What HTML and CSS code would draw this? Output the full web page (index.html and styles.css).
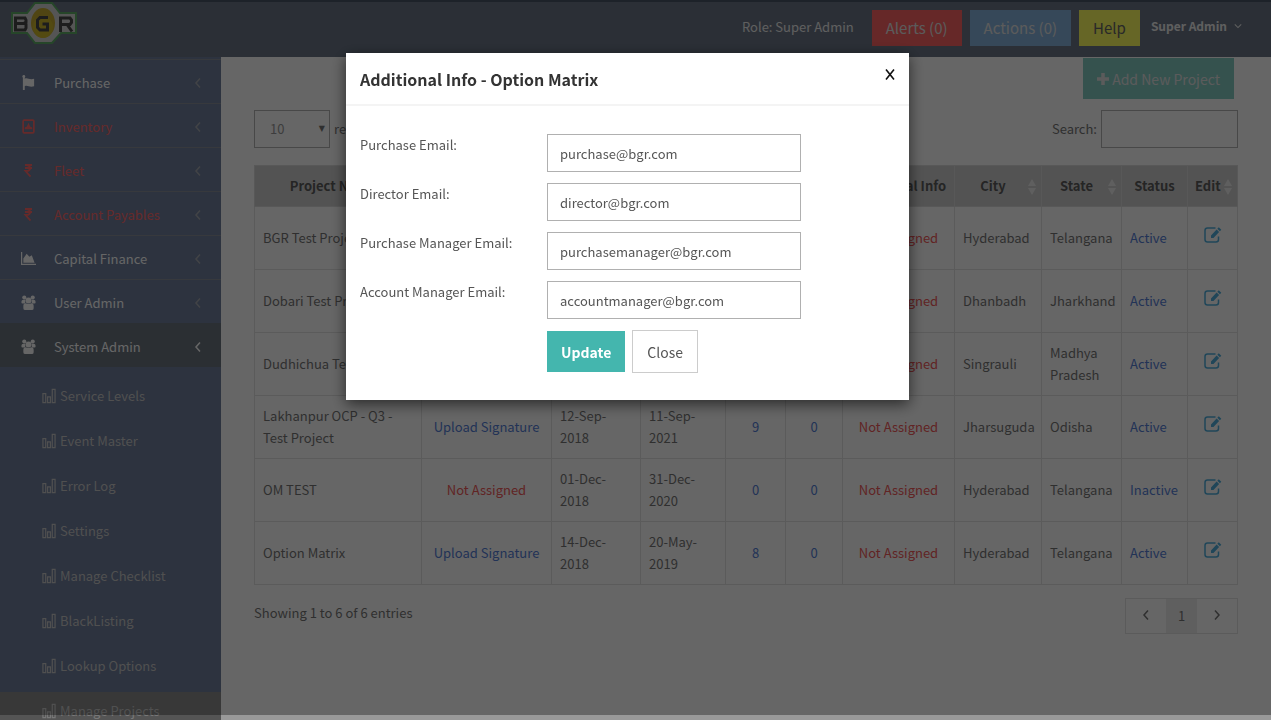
FILE: index.html
```
<!DOCTYPE html>
<html lang="en">
<head>
<meta charset="utf-8">
<title>Manage Projects</title>
<link rel="stylesheet" href="styles.css">
</head>
<body>
<svg class="defs" aria-hidden="true">
  <symbol id="i-left" viewBox="0 0 8 12"><path d="M6 1.500 2 6l4 4.500" fill="none" stroke="currentColor" stroke-width="1.500"/></symbol>
  <symbol id="i-right" viewBox="0 0 8 12"><path d="M2 1.500 6 6l-4 4.500" fill="none" stroke="currentColor" stroke-width="1.500"/></symbol>
  <symbol id="i-users" viewBox="0 0 16 16"><g fill="currentColor"><circle cx="3.500" cy="2.700" r="2.200"/><circle cx="12.500" cy="2.700" r="2.200"/><path d="M.5 8.500V6.800Q.5 5 2.500 5h2v4H1.500Q.5 9 .5 8.500ZM15.500 8.500V6.800Q15.500 5 13.500 5h-2v4h3q1 0 1-.5Z"/><circle cx="8" cy="5.800" r="3.200"/><path d="M2.500 14v-2.200Q2.500 8.800 5 8.800q3 1.400 6 0 2.500 0 2.500 3V14q0 2-2 2h-7q-2 0-2-2Z"/></g></symbol>
  <symbol id="i-bars" viewBox="0 0 15 16"><path d="M1 5.500h3v9.500H1ZM6 9h3v6H6ZM11 1h3v14h-3Z" fill="none" stroke="currentColor" stroke-width="1.300"/></symbol>
  <symbol id="i-rupee" viewBox="0 0 8 13"><path d="M.5 1h7M.5 4h7M1.500 1c5.500 0 5.500 6 0 6H1l5 5.500" fill="none" stroke="currentColor" stroke-width="1.800"/></symbol>
  <symbol id="i-flag" viewBox="0 0 14 16"><circle cx="2" cy="1.500" r="1.500" fill="currentColor"/><path d="M1 1h2v15H1ZM3 4c3-1.500 5 1.500 10 0v8c-5 1.500-7-1.500-10 0Z" fill="currentColor"/></symbol>
  <symbol id="i-invoice" viewBox="0 0 12 14"><rect x="1" y="1" width="10" height="12" rx="1" fill="none" stroke="currentColor" stroke-width="1.600"/><path d="M6 3.500 7.500 7 9.500 8v1.500h-7V8l2-1Z" fill="currentColor"/></symbol>
  <symbol id="i-area" viewBox="0 0 16 14"><path d="M0 0h1.300v12.500H16V14H0ZM2.500 11.500V7L6 2l3 3 2.500-1.500L14.500 11.500Z" fill="currentColor"/></symbol>
  <symbol id="i-edit" viewBox="0 0 18 18"><path d="M11.500 2H3.500Q1 2 1 4.500v9Q1 16 3.500 16h8.500q2.500 0 2.500-2.500V10.500" fill="none" stroke="currentColor" stroke-width="1.500"/><path d="m14.800 1.200 2.500 2.500-1.400 1.500-2.600-2.500ZM12.600 3.500l2.500 2.500-5.600 6H7V9.400Z" fill="currentColor"/></symbol>
  <symbol id="i-sort" viewBox="0 0 8 16"><path d="M4 0 8 7H0ZM4 16 0 9h8Z" fill="currentColor"/></symbol>
</svg>

<header class="topbar">
  <svg class="logo" viewBox="0 0 66 42" role="img" aria-label="BGR">
    <path d="M24 1h17l8 10h16v20H50l-9 10H24l-8-10H1V11h15Z" fill="#d5d5d5" stroke="#5fb068" stroke-width="2"/>
    <ellipse cx="32" cy="21" rx="12" ry="15" fill="#c8ac30"/>
    <ellipse cx="32" cy="25" rx="10" ry="11" fill="#d0b92c"/>
    <g fill="none" stroke="#4a4a4a" stroke-width="3"><path d="M4.500 16H14l1 2v2l-1.500 1 1.500 1v4l-1 2H4.500ZM5 21.500h9"/><path d="M37 15.500H29l-2.500 2.500v7.500l2.500 2.500h7.500v-6h-5"/><path d="M49.500 30V16H59l1.500 2v2.500L59 22.500h-9M56 22.500l5 7"/></g>
  </svg>
  <div class="top-actions">
    <span class="role">Role: Super Admin</span>
    <button class="top-btn alerts">Alerts (0)</button>
    <button class="top-btn actions">Actions (0)</button>
    <button class="top-btn help">Help</button>
    <button class="user">Super Admin <svg viewBox="0 0 10 6" width="8" height="6"><path d="m1 1 4 4 4-4" fill="none" stroke="currentColor" stroke-width="1.300"/></svg></button>
  </div>
</header>

<div class="layout">
  <nav class="sidebar">
    <a class="item" href="#"><svg class="ico"><use href="#i-flag"/></svg><span>Purchase</span><svg class="arrow"><use href="#i-left"/></svg></a>
    <a class="item red" href="#"><svg class="ico"><use href="#i-invoice"/></svg><span>Inventory</span><svg class="arrow"><use href="#i-left"/></svg></a>
    <a class="item red" href="#"><svg class="ico small"><use href="#i-rupee"/></svg><span>Fleet</span><svg class="arrow"><use href="#i-left"/></svg></a>
    <a class="item red" href="#"><svg class="ico small"><use href="#i-rupee"/></svg><span>Account Payables</span><svg class="arrow"><use href="#i-left"/></svg></a>
    <a class="item" href="#"><svg class="ico"><use href="#i-area"/></svg><span>Capital Finance</span><svg class="arrow"><use href="#i-left"/></svg></a>
    <a class="item" href="#"><svg class="ico"><use href="#i-users"/></svg><span>User Admin</span><svg class="arrow"><use href="#i-left"/></svg></a>
    <a class="item open" href="#"><svg class="ico"><use href="#i-users"/></svg><span>System Admin</span><svg class="arrow"><use href="#i-left"/></svg></a>
    <div class="submenu">
      <a href="#"><svg><use href="#i-bars"/></svg>Service Levels</a>
      <a href="#"><svg><use href="#i-bars"/></svg>Event Master</a>
      <a href="#"><svg><use href="#i-bars"/></svg>Error Log</a>
      <a href="#"><svg><use href="#i-bars"/></svg>Settings</a>
      <a href="#"><svg><use href="#i-bars"/></svg>Manage Checklist</a>
      <a href="#"><svg><use href="#i-bars"/></svg>BlackListing</a>
      <a href="#"><svg><use href="#i-bars"/></svg>Lookup Options</a>
      <a class="current" href="#"><svg><use href="#i-bars"/></svg>Manage Projects</a>
    </div>
  </nav>

  <main class="content">
    <div class="toolbar"><button class="add"><svg viewBox="0 0 12 12" width="12" height="12"><path d="M6 0v12M0 6h12" stroke="currentColor" stroke-width="3.500"/></svg>Add New Project</button></div>
    <div class="filters">
      <label class="length"><span class="select-wrap"><select><option>10</option></select></span>records</label>
      <label class="search">Search:<input type="text"></label>
    </div>
    <table class="projects">
      <colgroup><col class="c-name"><col class="c-sign"><col class="c-start"><col class="c-end"><col class="c-num"><col class="c-num2"><col class="c-info"><col class="c-city"><col class="c-state"><col class="c-status"><col class="c-edit"></colgroup>
      <thead><tr>
        <th class="sort">Project Name<svg><use href="#i-sort"/></svg></th><th></th><th></th><th></th><th></th><th></th><th>Additional Info</th>
        <th class="sort">City<svg><use href="#i-sort"/></svg></th><th class="sort">State<svg><use href="#i-sort"/></svg></th><th>Status</th><th class="sort">Edit<svg><use href="#i-sort"/></svg></th>
      </tr></thead>
      <tbody>
        <tr><td>BGR Test Project</td><td class="mid"></td><td></td><td></td><td></td><td></td><td class="mid"><a class="no" href="#">Not Assigned</a></td><td>Hyderabad</td><td>Telangana</td><td><a href="#">Active</a></td><td class="mid"><a class="edit" href="#" aria-label="Edit"><svg><use href="#i-edit"/></svg></a></td></tr>
        <tr><td>Dobari Test Project</td><td class="mid"></td><td></td><td></td><td></td><td></td><td class="mid"><a class="no" href="#">Not Assigned</a></td><td>Dhanbadh</td><td>Jharkhand</td><td><a href="#">Active</a></td><td class="mid"><a class="edit" href="#" aria-label="Edit"><svg><use href="#i-edit"/></svg></a></td></tr>
        <tr><td>Dudhichua Test Project</td><td class="mid"></td><td></td><td></td><td></td><td></td><td class="mid"><a class="no" href="#">Not Assigned</a></td><td>Singrauli</td><td>Madhya Pradesh</td><td><a href="#">Active</a></td><td class="mid"><a class="edit" href="#" aria-label="Edit"><svg><use href="#i-edit"/></svg></a></td></tr>
        <tr><td>Lakhanpur OCP - Q3 -<br>Test Project</td><td class="mid"><a href="#">Upload Signature</a></td><td>12-Sep-<br>2018</td><td>11-Sep-<br>2021</td><td class="mid"><a href="#">9</a></td><td class="mid"><a href="#">0</a></td><td class="mid"><a class="no" href="#">Not Assigned</a></td><td>Jharsuguda</td><td>Odisha</td><td><a href="#">Active</a></td><td class="mid"><a class="edit" href="#" aria-label="Edit"><svg><use href="#i-edit"/></svg></a></td></tr>
        <tr><td>OM TEST</td><td class="mid"><a class="no" href="#">Not Assigned</a></td><td>01-Dec-<br>2018</td><td>31-Dec-<br>2020</td><td class="mid"><a href="#">0</a></td><td class="mid"><a href="#">0</a></td><td class="mid"><a class="no" href="#">Not Assigned</a></td><td>Hyderabad</td><td>Telangana</td><td><a href="#">Inactive</a></td><td class="mid"><a class="edit" href="#" aria-label="Edit"><svg><use href="#i-edit"/></svg></a></td></tr>
        <tr><td>Option Matrix</td><td class="mid"><a href="#">Upload Signature</a></td><td>14-Dec-<br>2018</td><td>20-May-<br>2019</td><td class="mid"><a href="#">8</a></td><td class="mid"><a href="#">0</a></td><td class="mid"><a class="no" href="#">Not Assigned</a></td><td>Hyderabad</td><td>Telangana</td><td><a href="#">Active</a></td><td class="mid"><a class="edit" href="#" aria-label="Edit"><svg><use href="#i-edit"/></svg></a></td></tr>
      </tbody>
    </table>
    <div class="footer">
      <span>Showing 1 to 6 of 6 entries</span>
      <div class="pager"><button aria-label="Previous"><svg><use href="#i-left"/></svg></button><button class="on">1</button><button aria-label="Next"><svg><use href="#i-right"/></svg></button></div>
    </div>
  </main>
</div>

<div class="backdrop">
  <form class="modal" role="dialog" aria-labelledby="dlg-title">
    <div class="modal-head"><h4 id="dlg-title">Additional Info - Option Matrix</h4><button type="button" class="x" aria-label="Dismiss"><svg viewBox="0 0 10 11" width="10" height="11"><path d="m1 .5 8 10M9 .5l-8 10" stroke="#111" stroke-width="1.600"/></svg></button></div>
    <div class="modal-body">
      <label for="e1">Purchase Email:</label><input id="e1" type="text" value="purchase@bgr.com">
      <label for="e2">Director Email:</label><input id="e2" type="text" value="director@bgr.com">
      <label for="e3">Purchase Manager Email:</label><input id="e3" type="text" value="purchasemanager@bgr.com">
      <label for="e4">Account Manager Email:</label><input id="e4" type="text" value="accountmanager@bgr.com">
      <div class="buttons"><button type="button" class="update">Update</button><button type="button" class="close">Close</button></div>
    </div>
  </form>
</div>
</body>
</html>
```
FILE: styles.css
```
* { box-sizing: border-box; }
html { background: #fff; }
body {
  margin: 0;
  height: 100vh;
  overflow: hidden;
  display: flex;
  flex-direction: column;
  padding-right: 2px;
  font-family: "Noto Sans CJK SC", "Noto Sans", sans-serif;
  font-size: 13px;
  line-height: 22px;
  color: #555;
}
button, input, select { font: inherit; color: inherit; border-radius: 0; margin: 0; }
button { border: 0; padding: 0; background: none; }
a { color: #5580d8; text-decoration: none; }
.defs { position: absolute; width: 0; height: 0; }

.topbar {
  flex: none;
  height: 57px;
  background: #6c7788;
  border-top: 2px solid #4a5568;
  display: flex;
  justify-content: space-between;
  padding: 0 29px 0 11px;
  color: #fff;
}
.logo { width: 66px; height: 42px; }
.top-actions { display: flex; align-items: flex-start; gap: 8px; padding-top: 8px; }
.role { padding: 6px 10px 0 0; color: #eee; }
.top-btn { height: 36px; padding: 0 14px; font-size: 15px; color: #e4e4e4; }
.alerts { background: #ff6464; }
.actions { background: #88b5de; }
.help { background: #ffff60; color: #666; }
.user { font-weight: 700; font-size: 12px; padding: 5px 0 0 3px; display: flex; align-items: center; gap: 7px; color: #eee; }

.layout { flex: 1; min-height: 0; display: flex; }
.sidebar { width: 221px; flex: none; background: #707f9d; padding-top: 2px; overflow: hidden; }
.item {
  height: 44px;
  display: flex;
  align-items: center;
  padding: 2px 19px 0 21px;
  border-top: 1px solid #8a8f98;
  color: #fff;
}
.item span { flex: 1; padding-left: 18px; }
.ico { width: 15px; height: 15px; flex: none; }
.ico.small { height: 13px; }
.arrow { width: 8px; height: 12px; color: #a5a9b0; }
.item.red { color: #ff6a6a; }
.open { background: #6b7580; border-top-color: #6b7580; }
.open .arrow { color: #fff; }
.submenu { padding-top: 10px; display: flex; flex-direction: column; gap: 8px; }
.submenu a { height: 37px; flex: none; padding-left: 42px; display: flex; align-items: center; gap: 4px; color: #c8c8c8; }
.submenu svg { width: 14px; height: 16px; }
.submenu .current { background: #8c8c8c; }

.content { flex: 1; min-width: 0; background: #fff; padding: 1px 33px 0; color: #777; }
.toolbar { display: flex; justify-content: flex-end; padding-right: 4px; }
.add { height: 41px; background: #85ccc4; color: #e4e4e4; font-size: 14px; padding: 0 14px; display: flex; align-items: center; gap: 3px; }
.filters { display: flex; justify-content: space-between; margin: 11px 0 17px; }
.filters label { display: flex; align-items: center; gap: 4px; }
.select-wrap { position: relative; }
.select-wrap::after { content: "▼"; position: absolute; right: 5px; top: 8px; font: 8px/22px "DejaVu Sans", sans-serif; }
.length select { width: 76px; height: 38px; border: 1px solid #b4b4b4; background: #fff; appearance: none; padding-left: 15px; color: #999; }
.search input { width: 137px; height: 38px; border: 1px solid #b4b4b4; background: #fff; }

.projects { width: 100%; table-layout: fixed; border-collapse: collapse; }
.c-name { width: 167px; } .c-sign { width: 130px; } .c-start { width: 89px; } .c-end { width: 85px; }
.c-num { width: 60px; } .c-num2 { width: 57px; } .c-info { width: 112px; } .c-city { width: 87px; }
.c-state { width: 80px; } .c-status { width: 66px; } .c-edit { width: 50px; }
.projects th { height: 41px; background: #d0d0d0; border: 1px solid #ddd; color: #5c5c5c; font-weight: 700; padding: 0 7px; white-space: nowrap; }
.projects .sort { position: relative; padding-right: 17px; }
.sort svg { position: absolute; right: 5px; top: 13px; width: 8px; height: 16px; color: #eee; }
.projects td { height: 63px; border: 1px solid #e4e4e4; padding: 0 8px; }
.projects .mid { text-align: center; white-space: nowrap; }
.projects .no { color: #f25a5a; }
.projects .edit { color: #50b0de; }
.edit svg { width: 18px; height: 18px; }

.footer { display: flex; justify-content: space-between; margin-top: 13px; }
.footer span { padding-top: 4px; }
.pager { display: flex; border: 1px solid #e4e4e4; height: 36px; }
.pager button { width: 40px; }
.pager .on { width: 31px; background: #eee; }
.pager svg { width: 8px; height: 12px; }

.backdrop {
  position: fixed;
  inset: 0 2px 0 0;
  background: rgba(0, 0, 0, .6) padding-box;
  border-bottom: 5px solid rgba(0, 0, 0, .4);
  display: flex;
  justify-content: center;
  align-items: flex-start;
  padding: 53px 16px 0 0;
}
.modal { width: 563px; background: #fff; box-shadow: 0 4px 14px rgba(0, 0, 0, .6); }
.modal-head { height: 53px; padding: 0 14px; border-bottom: 2px solid #f4f4f4; display: flex; justify-content: space-between; align-items: center; }
.modal-head h4 { margin: 0; font-size: 16px; font-weight: 700; color: #333; }
.x { display: flex; padding-bottom: 9px; }
.modal-body { display: grid; grid-template-columns: 187px 254px; row-gap: 11px; padding: 28px 14px 27px; }
.modal-body input { height: 38px; border: 1px solid #b0b0b0; padding: 0 12px; width: 100%; background: #fff; }
.buttons { grid-column: 2; display: flex; align-items: center; gap: 7px; font-size: 14px; }
.update { background: #44b6ae; color: #fff; height: 41px; padding: 0 14px; font-weight: 700; }
.close { height: 43px; border: 1px solid #ccc; padding: 0 14px; }
```
